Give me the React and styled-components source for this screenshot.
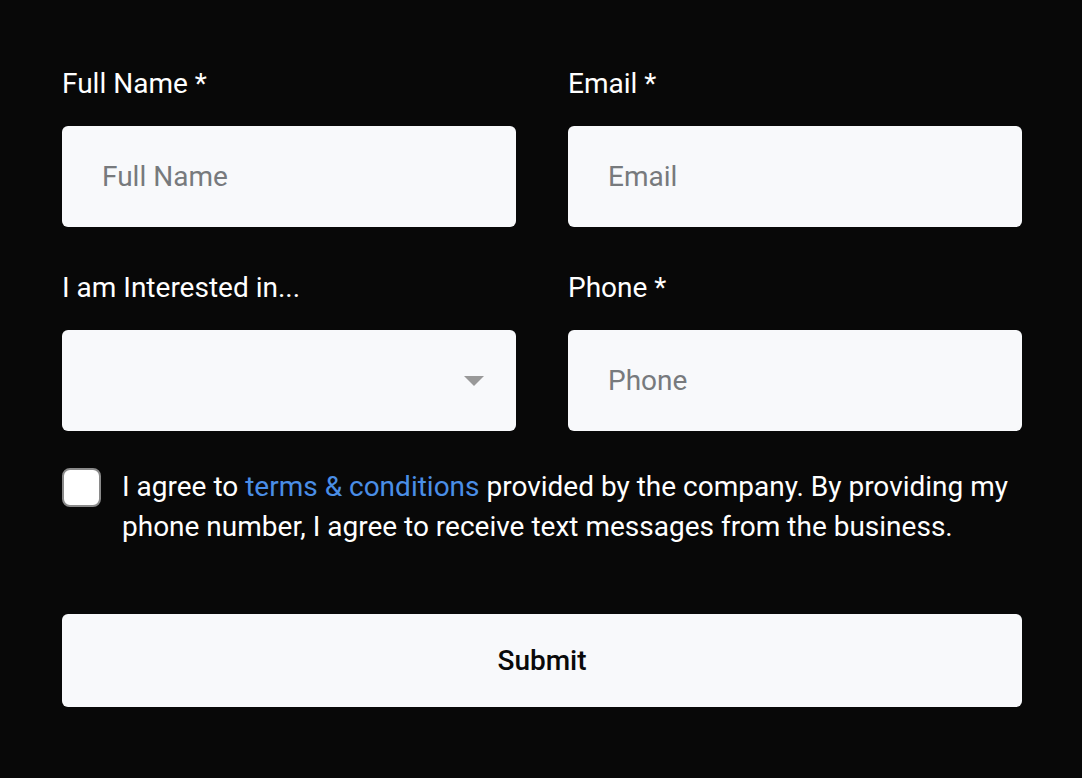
// Imports
import styled, {createGlobalStyle} from 'styled-components'



// Styles
const GlobalStyle = createGlobalStyle`
    *{box-sizing:border-box;}
    html,body{
        margin:0;
        padding:0;
        background-color:#080808;
        font-family:Roboto, "Noto Sans", sans-serif;
    }
`
const Page = styled.div`
    width:1082px;
    min-height:778px;
    padding:69px 60px 0 62px;
    background-color:#080808;
`
const Form = styled.form`
    width:960px;
    display:flex;
    flex-direction:column;
`
const Grid = styled.div`
    display:grid;
    column-gap:52px;
    row-gap:46px;
    grid-template-columns:454px 454px;
`
const Field = styled.div`
    display:flex;
    flex-direction:column;
`
const Label = styled.label`
    color:#fff;
    font-size:28px;
    line-height:30px;
    font-weight:400;
    margin-bottom:27px;
`
const Input = styled.input`
    width:100%;
    height:101px;
    border:none;
    outline:none;
    font-size:28px;
    color:#222;
    padding:0 40px;
    border-radius:6px;
    font-family:inherit;
    background-color:#f8f9fb;
    &::placeholder{color:#777a7d;}
`
const SelectBox = styled.div`
    height:101px;
    display:flex;
    align-items:center;
    border-radius:6px;
    padding:0 32px 0 40px;
    justify-content:flex-end;
    background-color:#f8f9fb;
`
const Caret = styled.span`
    width:0;
    height:0;
    border-left:10px solid transparent;
    border-right:10px solid transparent;
    border-top:10px solid #999;
`
const Agree = styled.div`
    display:flex;
    margin-top:36px;
    align-items:flex-start;
`
const Check = styled.span`
    width:39px;
    height:39px;
    flex-shrink:0;
    margin-top:1px;
    border-radius:8px;
    background-color:#fff;
    border:2.5px solid #8a8a8a;
    margin-right:21px;
`
const AgreeText = styled.p`
    margin:0;
    color:#fff;
    font-size:28px;
    line-height:40px;
`
const Link = styled.a`
    color:#4a8ee6;
    text-decoration:none;
`
const Submit = styled.button`
    width:100%;
    height:93px;
    border:none;
    color:#0a0a0a;
    cursor:pointer;
    margin-top:67px;
    font-size:28px;
    font-weight:500;
    border-radius:6px;
    font-family:inherit;
    background-color:#f8f9fb;
`



// Main Function
const App = () => {
  return (
    <Page>
        <GlobalStyle/>
        <Form onSubmit={e => e.preventDefault()}>
            <Grid>
                <Field>
                    <Label>Full Name *</Label>
                    <Input placeholder='Full Name'/>
                </Field>
                <Field>
                    <Label>Email *</Label>
                    <Input placeholder='Email'/>
                </Field>
                <Field>
                    <Label>I am Interested in...</Label>
                    <SelectBox><Caret/></SelectBox>
                </Field>
                <Field>
                    <Label>Phone *</Label>
                    <Input placeholder='Phone'/>
                </Field>
            </Grid>
            <Agree>
                <Check/>
                <AgreeText>
                    I agree to <Link href='#'>terms &amp; conditions</Link> provided by the company. By providing my phone number, I agree to receive text messages from the business.
                </AgreeText>
            </Agree>
            <Submit>Submit</Submit>
        </Form>
    </Page>
  )
}



// Export
export default App
